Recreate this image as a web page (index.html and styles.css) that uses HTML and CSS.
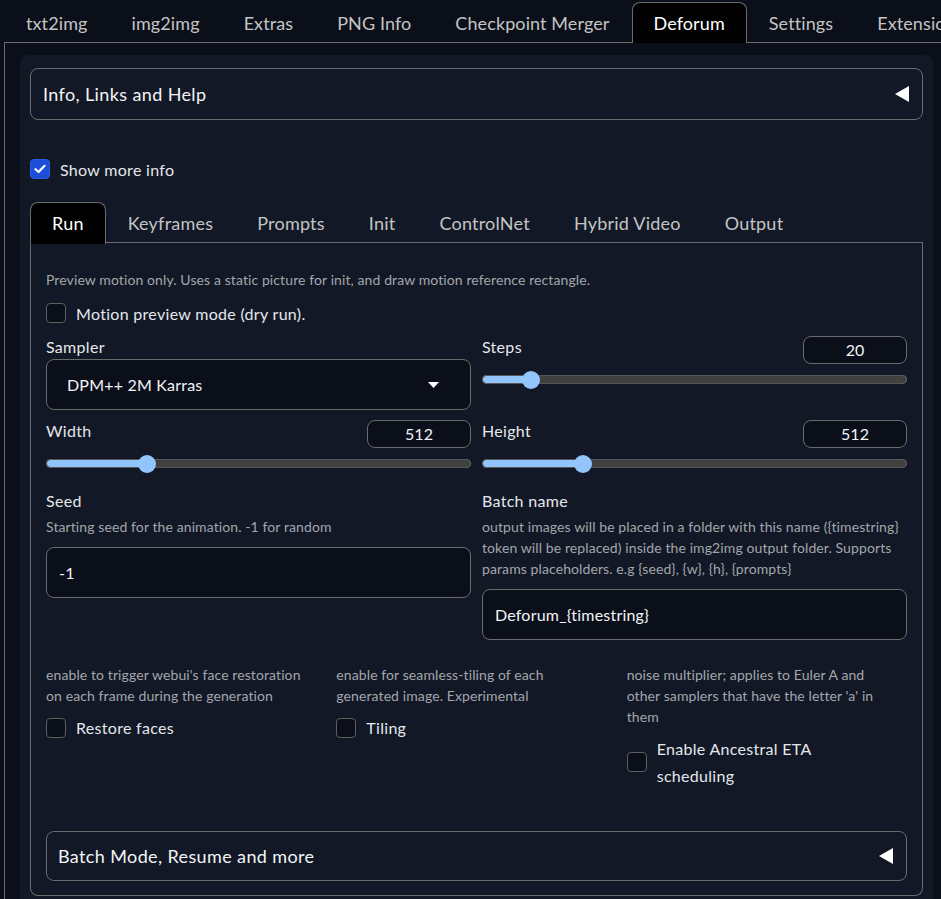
FILE: index.html
```html
<!DOCTYPE html>
<html>
<head>
<meta charset="utf-8">
<link rel="stylesheet" href="styles.css">
</head>
<body>
<nav class="topnav">
  <div class="tab">txt2img</div>
  <div class="tab">img2img</div>
  <div class="tab">Extras</div>
  <div class="tab">PNG Info</div>
  <div class="tab">Checkpoint Merger</div>
  <div class="tab active">Deforum</div>
  <div class="tab">Settings</div>
  <div class="tab">Extensions</div>
</nav>
<div class="tabpanel">
  <div class="maincol">
    <div class="accordion">
      <span>Info, Links and Help</span>
      <svg class="tri" width="14" height="16" viewBox="0 0 14 16"><polygon points="14,0 14,16 0,8" fill="#fff"/></svg>
    </div>

    <label class="check-row show-more">
      <span class="cb checked"><svg width="12" height="10" viewBox="0 0 12 10"><path d="M1.5 5.2 L4.6 8 L10.5 1.8" stroke="#fff" stroke-width="2.2" fill="none" stroke-linecap="round" stroke-linejoin="round"/></svg></span>
      <span>Show more info</span>
    </label>

    <div class="subtabs">
      <div class="stab active">Run</div>
      <div class="stab">Keyframes</div>
      <div class="stab">Prompts</div>
      <div class="stab">Init</div>
      <div class="stab">ControlNet</div>
      <div class="stab">Hybrid Video</div>
      <div class="stab">Output</div>
    </div>

    <div class="subpanel">
      <p class="info">Preview motion only. Uses a static picture for init, and draw motion reference rectangle.</p>
      <label class="check-row motion">
        <span class="cb"></span>
        <span>Motion preview mode (dry run).</span>
      </label>

      <div class="grid2">
        <div class="field">
          <div class="label">Sampler</div>
          <div class="dropdown">
            <span>DPM++ 2M Karras</span>
            <svg width="11" height="6" viewBox="0 0 11 6"><polygon points="0,0 11,0 5.5,6" fill="#fff"/></svg>
          </div>
        </div>
        <div class="field">
          <div class="slider-head">
            <div class="label">Steps</div>
            <div class="numbox">20</div>
          </div>
          <input class="range" type="range" min="1" max="200" value="20" style="background-size: 11.5% 100%, 100% 100%">
        </div>
        <div class="field">
          <div class="slider-head">
            <div class="label">Width</div>
            <div class="numbox">512</div>
          </div>
          <input class="range" type="range" min="64" max="2048" value="512" style="background-size: 24% 100%, 100% 100%">
        </div>
        <div class="field">
          <div class="slider-head">
            <div class="label">Height</div>
            <div class="numbox">512</div>
          </div>
          <input class="range" type="range" min="64" max="2048" value="512" style="background-size: 24% 100%, 100% 100%">
        </div>
      </div>

      <div class="grid2 second">
        <div class="field">
          <div class="label">Seed</div>
          <p class="info sub">Starting seed for the animation. -1 for random</p>
          <div class="textbox">-1</div>
        </div>
        <div class="field">
          <div class="label">Batch name</div>
          <p class="info sub">output images will be placed in a folder with this name ({timestring} token will be replaced) inside the img2img output folder. Supports params placeholders. e.g {seed}, {w}, {h}, {prompts}</p>
          <div class="textbox">Deforum_{timestring}</div>
        </div>
      </div>

      <div class="grid3">
        <div class="field">
          <p class="info">enable to trigger webui's face restoration on each frame during the generation</p>
          <label class="check-row opt">
            <span class="cb"></span>
            <span>Restore faces</span>
          </label>
        </div>
        <div class="field">
          <p class="info">enable for seamless-tiling of each generated image. Experimental</p>
          <label class="check-row opt">
            <span class="cb"></span>
            <span>Tiling</span>
          </label>
        </div>
        <div class="field">
          <p class="info">noise multiplier; applies to Euler A and other samplers that have the letter 'a' in them</p>
          <label class="check-row opt">
            <span class="cb"></span>
            <span class="narrow">Enable Ancestral ETA scheduling</span>
          </label>
        </div>
      </div>

      <div class="accordion inner">
        <span>Batch Mode, Resume and more</span>
        <svg class="tri" width="14" height="16" viewBox="0 0 14 16"><polygon points="14,0 14,16 0,8" fill="#fff"/></svg>
      </div>
    </div>
  </div>
</div>
</body>
</html>
```

FILE: styles.css
```css
* { box-sizing: border-box; }

html, body {
  margin: 0;
  padding: 0;
  background: #0b0f19;
  overflow: hidden;
}

body {
  font-family: "Lato", "Liberation Sans", sans-serif;
  color: #e5e7eb;
  width: 941px;
  height: 899px;
}

.topnav {
  display: flex;
  margin: 2px 0 0 4px;
  border-bottom: 1px solid #6b6b6b;
  white-space: nowrap;
  width: 1000px;
}

.tab {
  height: 40px;
  padding: 0 21px;
  border: 1px solid transparent;
  border-bottom: none;
  border-radius: 8px 8px 0 0;
  font-size: 18px;
  letter-spacing: 0.1px;
  line-height: 40px;
  color: #c4c4c4;
  flex: none;
}

.tab.active {
  background: #000;
  border-color: #6b6b6b;
  color: #fff;
  margin-bottom: -1px;
  height: 41px;
}

.tabpanel {
  margin-left: 4px;
  border-left: 1px solid #6b6b6b;
  padding: 12px 0 0 15px;
  height: 860px;
}

.maincol {
  width: 913px;
  background: #121826;
  border-radius: 8px;
  padding: 13px 10px 0;
  height: 860px;
}

.accordion {
  display: flex;
  align-items: center;
  justify-content: space-between;
  height: 52px;
  border: 1px solid #6b6b6b;
  border-radius: 8px;
  padding: 0 13px 0 12px;
  font-size: 18px;
  letter-spacing: 0.38px;
  color: #f3f4f6;
}

.accordion.inner {
  height: 50px;
  margin-top: 42px;
  padding: 0 13px 0 11px;
}

.check-row {
  display: flex;
  align-items: center;
  gap: 10px;
  font-size: 16px;
  letter-spacing: 0.3px;
  color: #e5e7eb;
}

.cb {
  flex: none;
  width: 20px;
  height: 20px;
  border-radius: 4px;
  border: 1px solid #5e5e5e;
  background: #0a0f1a;
  display: flex;
  align-items: center;
  justify-content: center;
}

.cb.checked {
  background: #1d4ed8;
  border-color: #2c5be0;
}

.show-more {
  margin-top: 39px;
  height: 20px;
}

.subtabs {
  display: flex;
  margin-top: 23px;
  border-bottom: 1px solid #6b6b6b;
  height: 41px;
}

.stab {
  height: 41px;
  padding: 0 21px;
  border: 1px solid transparent;
  border-bottom: none;
  border-radius: 8px 8px 0 0;
  font-size: 18px;
  letter-spacing: 0.22px;
  line-height: 40px;
  color: #c4c4c4;
}

.stab.active {
  background: #000;
  border-color: #6b6b6b;
  color: #fff;
  height: 42px;
  margin-bottom: -1px;
}

.subpanel {
  border: 1px solid #6b6b6b;
  border-top: none;
  border-radius: 0 0 8px 8px;
  padding: 26px 15px 14px;
}

.info {
  margin: 0;
  font-size: 14px;
  letter-spacing: 0.1px;
  line-height: 21px;
  color: #a3a6ab;
}

.motion {
  margin-top: 13px;
  height: 20px;
}

.grid2 {
  display: grid;
  grid-template-columns: 1fr 1fr;
  column-gap: 11px;
  row-gap: 10px;
  margin-top: 13px;
}

.grid2.second {
  margin-top: 18px;
}

.field {
  display: flex;
  flex-direction: column;
  min-width: 0;
}

.label {
  font-size: 16px;
  letter-spacing: 0.3px;
  line-height: 22px;
  color: #e5e7eb;
}

.dropdown {
  margin-top: 1px;
  height: 51px;
  border: 1px solid #6b6b6b;
  border-radius: 8px;
  background: #0a0f1a;
  display: flex;
  align-items: center;
  justify-content: space-between;
  padding: 0 31px 0 20px;
  font-size: 16px;
  letter-spacing: 0.2px;
  color: #f3f4f6;
}

.slider-head {
  display: flex;
  justify-content: space-between;
  align-items: flex-start;
  height: 28px;
}

.numbox {
  width: 104px;
  height: 28px;
  border: 1px solid #6b6b6b;
  border-radius: 8px;
  background: #0a0f1a;
  text-align: center;
  font-size: 16px;
  line-height: 26px;
  color: #f3f4f6;
}

.range {
  -webkit-appearance: none;
  appearance: none;
  height: 9px;
  width: 100%;
  border-radius: 5px;
  background-image: linear-gradient(#93c5fd, #93c5fd), linear-gradient(#404040, #404040);
  background-repeat: no-repeat;
  border: 1px solid #555;
  outline: none;
  margin: 11px 0 4px;
}

.range::-webkit-slider-thumb {
  -webkit-appearance: none;
  appearance: none;
  width: 18px;
  height: 18px;
  border-radius: 50%;
  background: #93c5fd;
  border: none;
}

.info.sub {
  margin-top: 4px;
}

.textbox {
  margin-top: 10px;
  height: 51px;
  border: 1px solid #6b6b6b;
  border-radius: 8px;
  background: #0a0f1a;
  display: flex;
  align-items: center;
  padding: 0 12px;
  font-size: 16px;
  letter-spacing: 0.2px;
  color: #f3f4f6;
}

.grid3 {
  display: grid;
  grid-template-columns: 1fr 1fr 1fr;
  column-gap: 10px;
  margin-top: 24px;
}

.grid3 .info {
  max-width: 265px;
}

.opt {
  margin-top: 8px;
  line-height: 27px;
}

.narrow {
  max-width: 170px;
}
```
